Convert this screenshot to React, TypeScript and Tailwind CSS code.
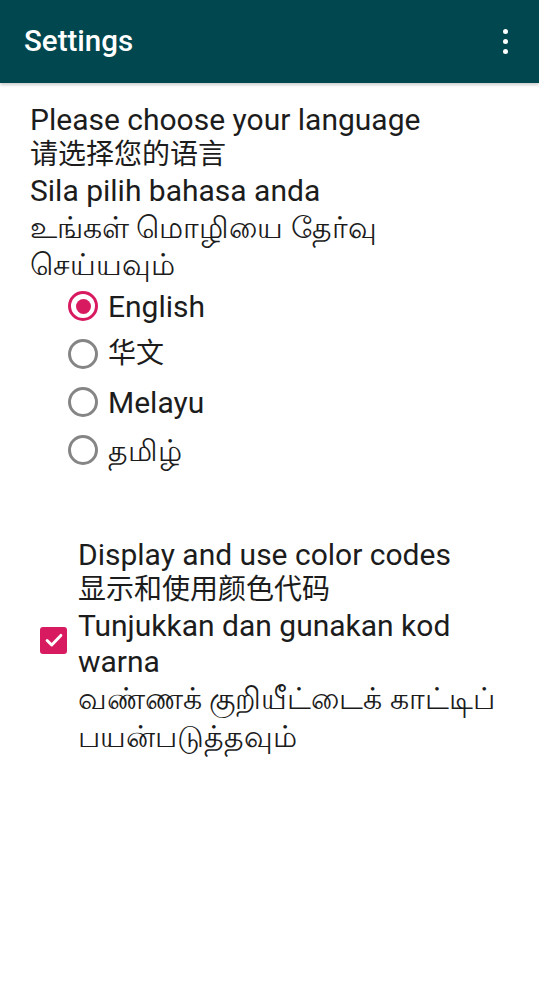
import React from "react";

const font = { fontFamily: 'Roboto, "Noto Sans", "Noto Sans CJK SC", sans-serif' };

function Radio({ checked, label, cjk }: { checked?: boolean; label: string; cjk?: boolean }) {
  return (
    <div className="flex h-[48px] items-center">
      <div
        className={
          "ml-[68px] flex h-[30px] w-[30px] shrink-0 items-center justify-center rounded-full border-[3px] " +
          (checked ? "border-[#d81b60]" : "border-[#858585]")
        }
      >
        {checked && <div className="h-[15px] w-[15px] rounded-full bg-[#d81b60]" />}
      </div>
      <span className={"ml-[10px] text-[#1c1c1c] " + (cjk ? "text-[28px]" : "text-[30px]")}>{label}</span>
    </div>
  );
}

export default function App() {
  return (
    <div className="min-h-[1000px] w-[539px] bg-white" style={font}>
      <div className="relative z-10 flex h-[83px] items-center justify-between bg-[#00474f] pl-[24px] pr-[31px] shadow-[0_2px_3px_rgba(0,0,0,0.2)]">
        <span className="text-[29.5px] font-medium text-white">Settings</span>
        <div className="flex flex-col gap-[5px]">
          <div className="h-[5px] w-[5px] rounded-full bg-white" />
          <div className="h-[5px] w-[5px] rounded-full bg-white" />
          <div className="h-[5px] w-[5px] rounded-full bg-white" />
        </div>
      </div>
      <div className="pl-[30px] pt-[19px] text-[30px] text-[#1c1c1c]">
        <div className="flex h-[35px] items-center whitespace-nowrap">Please choose your language</div>
        <div className="flex h-[35px] items-center whitespace-nowrap text-[28px]">请选择您的语言</div>
        <div className="flex h-[36px] items-center whitespace-nowrap">Sila pilih bahasa anda</div>
        <div className="flex h-[38px] items-center whitespace-nowrap">உங்கள் மொழியை தேர்வு</div>
        <div className="flex h-[36px] items-center whitespace-nowrap">செய்யவும்</div>
      </div>
      <div className="flex flex-col">
        <Radio checked label="English" />
        <Radio label="华文" cjk />
        <Radio label="Melayu" />
        <Radio label="தமிழ்" />
      </div>
      <div className="mt-[63px] flex items-center">
        <div className="mb-[12px] ml-[40px] flex h-[27px] w-[27px] shrink-0 items-center justify-center rounded-[3px] bg-[#d81b60]">
          <svg width="22" height="22" viewBox="0 0 24 24" fill="none">
            <path d="M4.5 12.5l5 5L19.5 7" stroke="white" strokeWidth="3.2" strokeLinecap="round" strokeLinejoin="round" />
          </svg>
        </div>
        <div className="ml-[11px] text-[30px] text-[#1c1c1c]">
          <div className="flex h-[35px] items-center whitespace-nowrap">Display and use color codes</div>
          <div className="flex h-[35px] items-center whitespace-nowrap text-[28px]">显示和使用颜色代码</div>
          <div className="flex h-[36px] items-center whitespace-nowrap">Tunjukkan dan gunakan kod</div>
          <div className="flex h-[36px] items-center whitespace-nowrap">warna</div>
          <div className="flex h-[38px] items-center whitespace-nowrap">வண்ணக் குறியீட்டைக் காட்டிப்</div>
          <div className="flex h-[38px] items-center whitespace-nowrap">பயன்படுத்தவும்</div>
        </div>
      </div>
    </div>
  );
}
